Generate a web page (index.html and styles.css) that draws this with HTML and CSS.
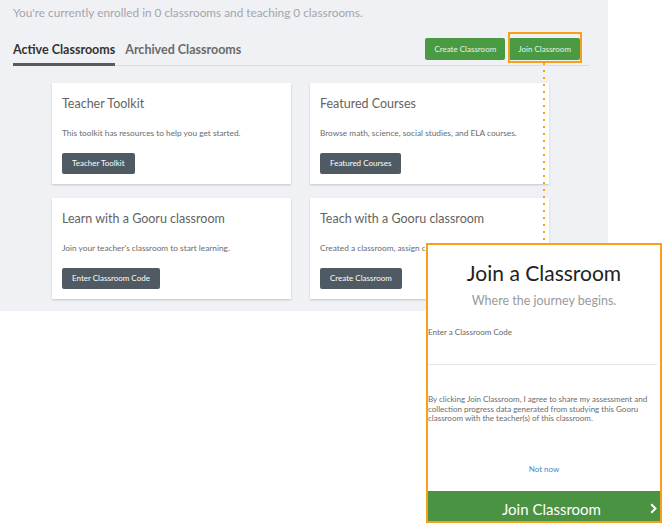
FILE: index.html
```html
<!DOCTYPE html>
<html lang="en">
<head>
  <meta charset="UTF-8">
  <meta name="viewport" content="width=device-width, initial-scale=1.0">
  <title>Classrooms</title>
  <link rel="stylesheet" href="styles.css">
</head>
<body>
  <div class="page">
    <div class="dashboard">
      <p class="intro">You're currently enrolled in 0 classrooms and teaching 0 classrooms.</p>
      <div class="tabs-row">
        <div class="tabs">
          <span class="tab active">Active Classrooms</span>
          <span class="tab">Archived Classrooms</span>
        </div>
        <div class="actions">
          <button class="btn-green">Create Classroom</button>
          <button class="btn-green">Join Classroom</button>
        </div>
      </div>

      <div class="cards">
        <div class="card">
          <h3>Teacher Toolkit</h3>
          <p>This toolkit has resources to help you get started.</p>
          <button class="btn-dark">Teacher Toolkit</button>
        </div>
        <div class="card">
          <h3>Featured Courses</h3>
          <p>Browse math, science, social studies, and ELA courses.</p>
          <button class="btn-dark">Featured Courses</button>
        </div>
        <div class="card">
          <h3>Learn with a Gooru classroom</h3>
          <p>Join your teacher's classroom to start learning.</p>
          <button class="btn-dark">Enter Classroom Code</button>
        </div>
        <div class="card">
          <h3>Teach with a Gooru classroom</h3>
          <p>Created a classroom, assign content, and track progress.</p>
          <button class="btn-dark">Create Classroom</button>
        </div>
      </div>
    </div>

    <!-- callout pointing at the join button -->
    <div class="highlight"></div>
    <div class="dots"></div>

    <div class="modal">
      <h2>Join a Classroom</h2>
      <p class="subtitle">Where the journey begins.</p>
      <label class="code-label">Enter a Classroom Code</label>
      <div class="code-input"></div>
      <p class="terms">By clicking Join Classroom, I agree to share my assessment and collection progress data generated from studying this Gooru classroom with the teacher(s) of this classroom.</p>
      <a class="not-now">Not now</a>
      <div class="modal-footer">
        <span>Join Classroom</span>
        <svg width="7" height="11" viewBox="0 0 7 11"><path d="M1.2 1.2 L5.5 5.5 L1.2 9.8" fill="none" stroke="#fff" stroke-width="2"/></svg>
      </div>
    </div>
  </div>
</body>
</html>
```

FILE: styles.css
```css
* { box-sizing: border-box; }
body {
  margin: 0;
  font-family: Lato, 'Noto Sans', sans-serif;
  background: #fff;
}
.page {
  position: relative;
  width: 663px;
  height: 525px;
}
.dashboard {
  width: 608px;
  height: 311px;
  background: #f0f1f5;
  padding: 6px 19px 0 13px;
}
.intro {
  margin: 0;
  font-size: 11.8px;
  line-height: 14px;
  color: #a3a6ab;
}
.tabs-row {
  display: flex;
  justify-content: space-between;
  align-items: flex-end;
  margin-top: 18px;
  border-bottom: 1px solid #dcdde2;
}
.tabs {
  display: flex;
  gap: 10px;
}
.tab {
  font-size: 12.5px;
  font-weight: bold;
  line-height: 16px;
  color: #6a6a6a;
  padding-bottom: 5px;
  border-bottom: 3px solid transparent;
  margin-bottom: -1px;
}
.tab.active {
  color: #333;
  border-bottom-color: #5b5b5b;
}
.actions {
  display: flex;
  gap: 4px;
  margin: 0 9px 5px 0;
}
.btn-green {
  background: #4a9a44;
  color: #e9f2e7;
  border: none;
  border-radius: 2px;
  height: 22px;
  padding: 0 9px;
  font-family: inherit;
  font-size: 8px;
}
.cards {
  display: grid;
  grid-template-columns: 239px 239px;
  gap: 14px 19px;
  margin: 17px 0 0 39px;
}
.card {
  background: #fff;
  padding: 11px 10px 10px;
  box-shadow: 0 1px 2px rgba(0,0,0,0.18);
  height: 101px;
}
.card h3 {
  margin: 0;
  font-size: 12.5px;
  font-weight: normal;
  line-height: 20px;
  color: #636363;
}
.card p {
  margin: 13px 0 11px;
  font-size: 8.3px;
  line-height: 12px;
  color: #6b6b6b;
  white-space: nowrap;
}
.btn-dark {
  background: #505a62;
  color: #fff;
  border: none;
  border-radius: 2px;
  height: 21px;
  padding: 0 10px;
  font-family: inherit;
  font-size: 8px;
}
.highlight {
  position: absolute;
  left: 508px;
  top: 32px;
  width: 74px;
  height: 31px;
  border: 2px solid #f7a11a;
}
.dots {
  position: absolute;
  left: 543px;
  top: 63px;
  width: 2px;
  height: 180px;
  background: repeating-linear-gradient(to bottom, #f7a11a 0 2px, transparent 2px 7px);
}
.modal {
  position: absolute;
  left: 426px;
  top: 243px;
  width: 236px;
  height: 280px;
  background: #fff;
  border: 2px solid #f7a11a;
  display: flex;
  flex-direction: column;
  padding-top: 15px;
}
.modal h2 {
  margin: 0;
  text-align: center;
  font-size: 21px;
  font-weight: normal;
  line-height: 26px;
  color: #222;
}
.subtitle {
  margin: 7px 0 0;
  text-align: center;
  font-size: 12.5px;
  line-height: 16px;
  color: #9a9a9a;
}
.code-label {
  margin-top: 18px;
  font-size: 8px;
  line-height: 10px;
  color: #666;
}
.code-input {
  height: 28px;
  margin-right: 3px;
  border-bottom: 1px solid #e6e6e6;
}
.terms {
  margin: 30px 8px 0 0;
  font-size: 8px;
  line-height: 9.5px;
  color: #6b6b6b;
}
.not-now {
  margin-top: 40px;
  text-align: center;
  font-size: 8px;
  line-height: 10px;
  color: #4a86c5;
}
.modal-footer {
  margin-top: auto;
  height: 30px;
  padding-top: 5px;
  background: #4a9342;
  display: flex;
  align-items: center;
  color: #fff;
}
.modal-footer span {
  flex: 1;
  text-align: center;
  padding-left: 25px;
  font-size: 15px;
}
.modal-footer svg {
  margin-right: 3px;
}
```
